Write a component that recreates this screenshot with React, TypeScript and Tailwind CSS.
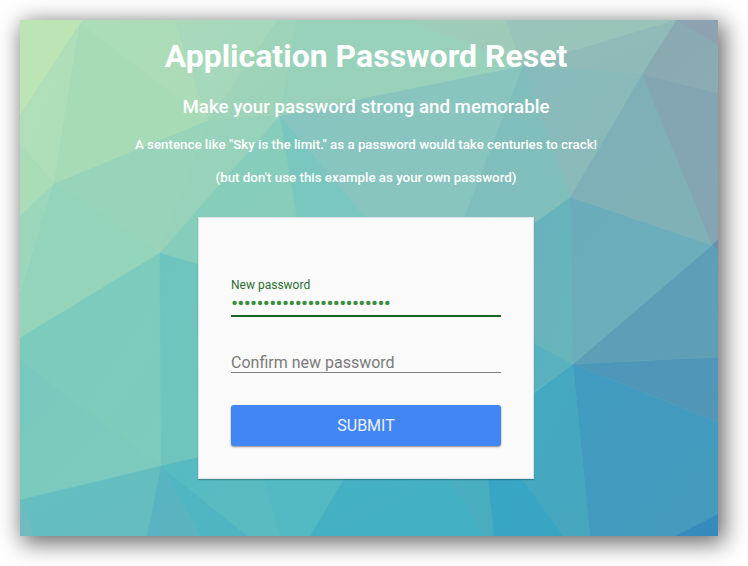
type Facet = { points: string; from: string; to: string };

// Low-poly backdrop: each facet fades slightly from its upper left to its lower right.
const facets: Facet[] = [
  { points: '20,20 84,20 80,24 20,116', from: '#bce4b5', to: '#bce4b5' },
  { points: '80,24 54,184 20,144 20,116', from: '#b0dfb8', to: '#aedeb8' },
  { points: '20,144 54,184 20,217', from: '#a9ddb9', to: '#a9ddb5' },
  { points: '80,24 208,121 54,184', from: '#a7dbb8', to: '#a7dbb8' },
  { points: '84,20 175,20 208,121 80,24', from: '#abddb9', to: '#acdbb6' },
  { points: '175,20 278,20 208,121', from: '#a8d9bb', to: '#a4d6bb' },
  { points: '278,20 297,20 280,116 208,121', from: '#9fd5b9', to: '#9cd3b9' },
  { points: '297,20 506,20 523,66 280,116', from: '#98d2bb', to: '#99d0ba' },
  { points: '410,20 506,20 523,66', from: '#9dcdb9', to: '#9fcab7' },
  { points: '280,116 523,66 362,485', from: '#88c5c0', to: '#8ac5bd' },
  { points: '54,184 208,121 160,253', from: '#97d4bb', to: '#99d4b9' },
  { points: '208,121 280,116 160,253', from: '#97d4ba', to: '#96d1ba' },
  { points: '280,116 297,217 297,293 160,253', from: '#85cdbb', to: '#88cdba' },
  { points: '280,116 365,217 297,217', from: '#79c6bf', to: '#7bc7bf' },
  { points: '20,217 54,184 20,295', from: '#9bd7bb', to: '#9cd7bb' },
  { points: '54,184 160,253 20,338 20,295', from: '#93d4bb', to: '#94d4bb' },
  { points: '160,253 161,466 20,361 20,338', from: '#7bcbbd', to: '#7eccbb' },
  { points: '20,361 161,466 20,500', from: '#78c9be', to: '#7dcbbd' },
  { points: '160,253 200,265 200,458 161,466', from: '#6dc4bf', to: '#70c5bd' },
  { points: '20,500 161,466 147,536 33,536', from: '#64bec0', to: '#66bdc0' },
  { points: '20,500 33,536 20,536', from: '#6fbbbf', to: '#72babf' },
  { points: '161,466 147,536 201,536', from: '#57b4c1', to: '#5bb4c0' },
  { points: '161,466 201,536 248,536', from: '#51b6c2', to: '#4fb5c3' },
  { points: '161,466 200,457 257,457 280,536 248,536', from: '#56bbc2', to: '#59bcc0' },
  { points: '257,457 357,457 310,536 280,536', from: '#53b9c3', to: '#52b8c1' },
  { points: '357,457 486,457 494,536 310,536', from: '#45b2c2', to: '#43afc3' },
  { points: '435,457 486,457 494,536 485,536', from: '#4aafc1', to: '#49acbf' },
  { points: '486,457 534,393 534,494 564,536 494,536', from: '#36a6c4', to: '#38a5c3' },
  { points: '521,478 505,457 534,393 573,364 590,536 564,536', from: '#44aac2', to: '#46a6be' },
  { points: '573,364 718,422 718,514 675,536 590,536', from: '#419bc0', to: '#449bbe' },
  { points: '675,536 718,514 718,536', from: '#358db9', to: '#358aba' },
  { points: '573,364 718,357 718,422', from: '#4c97ba', to: '#5396b7' },
  { points: '573,364 712,245 718,250 718,357', from: '#5d9fb9', to: '#5f9fb6' },
  { points: '530,341 573,364 530,395', from: '#56b1c1', to: '#5cb2bd' },
  { points: '530,226 570,197 573,364 530,341', from: '#67b3bd', to: '#69b5bc' },
  { points: '570,197 712,245 573,364', from: '#6aacbb', to: '#6dafba' },
  { points: '570,197 642,74 712,245', from: '#7eb0b9', to: '#80b1b6' },
  { points: '642,74 718,93 718,240 712,245', from: '#82a6b2', to: '#84a5b1' },
  { points: '712,245 718,240 718,250', from: '#6890b1', to: '#6890b1' },
  { points: '642,74 676,20 718,45 718,93', from: '#8aa8b2', to: '#8aacb1' },
  { points: '676,20 718,20 718,45', from: '#8ba4b0', to: '#8fa0b0' },
  { points: '506,20 676,20 523,66', from: '#99c4bb', to: '#98c4b8' },
  { points: '676,20 642,74 523,66', from: '#90bbba', to: '#8fbab8' },
  { points: '523,66 642,74 570,197', from: '#87bbbb', to: '#8bbab8' },
  { points: '523,66 570,197 530,226 460,228', from: '#7fbdbc', to: '#82bfbb' },
];

function Backdrop() {
  return (
    <svg className="absolute inset-0 h-full w-full" viewBox="20 20 698 516" aria-hidden="true">
      <defs>
        {facets.map((f, i) => (
          <linearGradient key={i} id={`facet-${i}`} x1="0" y1="0" x2="1" y2="1">
            <stop offset="0" stopColor={f.from} />
            <stop offset="1" stopColor={f.to} />
          </linearGradient>
        ))}
      </defs>
      {facets.map((f, i) => (
        <polygon key={i} points={f.points} fill={`url(#facet-${i})`} stroke={`url(#facet-${i})`} strokeWidth="0.4" />
      ))}
    </svg>
  );
}

export default function App() {
  return (
    <div className="h-[566px] w-[748px] overflow-hidden bg-white pl-5 pt-5 font-['Roboto',sans-serif]">
      <main className="relative h-[516px] w-[698px] bg-[#7cc8bd] shadow-[4px_5px_22px_2px_rgba(0,0,0,0.6)]">
        <Backdrop />
        <div className="relative flex flex-col items-center pr-[6px] text-white">
          <h1 className="mt-4 text-[32px] leading-10 font-bold">Application Password Reset</h1>
          <h2 className="mt-[19px] text-[18.72px] leading-6 font-medium">Make your password strong and memorable</h2>
          <p className="mt-4 text-[13.33px] leading-5 font-medium">
            A sentence like "Sky is the limit." as a password would take centuries to crack!
          </p>
          <p className="mt-[13px] text-[13.33px] leading-5 font-medium">(but don't use this example as your own password)</p>
          <form className="mt-[29px] flex h-[262px] w-[336px] flex-col border border-[#dde3e2] bg-[#fafafa] px-8 pt-[59px] shadow-[0_1px_1px_rgba(0,0,0,0.25)]">
            <label className="flex h-[40px] flex-col border-b-2 border-[#1b6422] text-[12px] leading-4 text-[#2b6e31]">
              New password
              <span className="text-[21px] leading-5 tracking-[-0.72px] text-[#388e3c]">•••••••••••••••••••••••••</span>
            </label>
            <label className="mt-[36px] flex h-5 items-center border-b border-[#808080] text-[16px] leading-5 text-[#7a7a7a]">
              Confirm new password
            </label>
            <button
              type="button"
              className="mt-8 h-[41px] rounded-[3px] bg-[#4285f4] text-[16px] text-white/90 shadow-[0_1px_2px_rgba(0,0,0,0.45)]"
            >
              SUBMIT
            </button>
          </form>
        </div>
      </main>
    </div>
  );
}
